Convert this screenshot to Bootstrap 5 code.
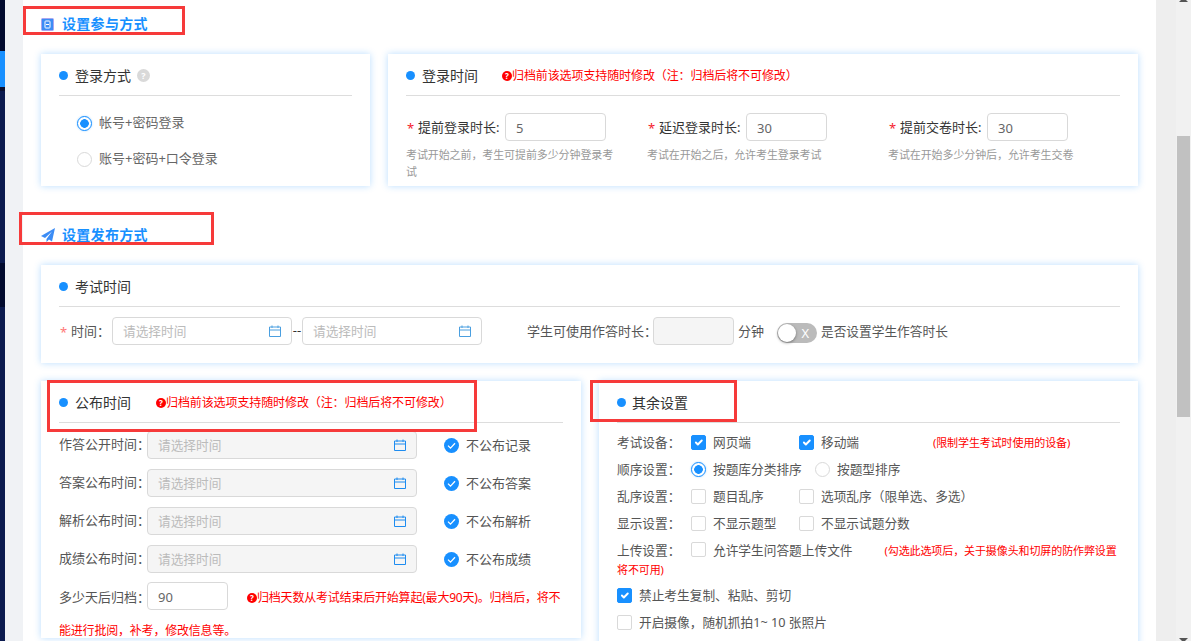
<!DOCTYPE html>
<html lang="zh-CN">
<head>
<meta charset="utf-8">
<title>设置</title>
<link href="https://cdn.jsdelivr.net/npm/bootstrap@5.3.0/dist/css/bootstrap.min.css" rel="stylesheet">
<style>
html,body{height:641px;overflow:hidden}
body{font-family:"Noto Sans","Noto Sans CJK SC",sans-serif;font-size:13px;color:#555;background:#fff;position:relative}
.page-wrap{height:641px}
.side-nav{width:5px;background:#0c1b4f}
.sn-a{height:51px;background:#020b2e}
.sn-b{height:36px;background:#1890ff}
.sn-c{height:4px;background:#0a1030}
.sn-d{height:172px}
.sn-e{height:44px;background:#020b2e}
.gutter-l{width:18px;background:#f0f2f5}
.main-area{width:1133px;padding:0 18px;overflow:hidden;height:641px}
.gutter-r{width:20px;background:#eee}
.sbar{width:15px;background:#f1f1f1;height:641px}
.sbar-thumb{width:13px;height:281px;margin-top:134px;background:#c1c1c1}
.sbar svg{display:block}
.gap-18{gap:18px}
.sec-head{height:18px;line-height:18px;font-size:14px;letter-spacing:.3px;font-weight:700;color:#1890ff;margin-top:15px;margin-bottom:21px}
.sec-head.second{margin-top:40px}
.sec-head svg{margin-right:8px;flex:none}
.sec-head.second svg{margin-right:7px}
.panel{background:#fff;box-shadow:0 0 7px rgba(24,144,255,.3);border-radius:0}
.panel-head{height:42px;flex:none;padding-top:2px;margin:0 18px;border-bottom:1px solid #ddd;color:#333;line-height:20px;font-size:14px}
.dot{width:9px;height:9px;border-radius:50%;background:#1890ff;margin-right:7px;flex:none}
.hint-red{color:#f00;font-size:12px;line-height:18px;letter-spacing:-.1px}
.q-red,.q-gray{display:inline-block;width:10px;height:10px;border-radius:50%;background:#f00;color:#fff;font-size:8px;line-height:10px;text-align:center;font-weight:700;vertical-align:1px;letter-spacing:0}
.q-gray{width:13px;height:13px;line-height:13px;background:#d9d9d9;font-size:9px;margin-left:6px}
.fake-input{height:28px;border:1px solid #d9d9d9;border-radius:4px;background:#fff;padding:0 10px;color:#666;line-height:28px;flex:none}
.fake-input.off{background:#f5f5f5}
.ph{color:#bbb;font-size:12.7px}
.w-81{width:81px}.w-101{width:101px}.w-180{width:180px}.w-270{width:270px}
.star{color:#f5222d;width:12px;flex:none;padding:3px 0 0 1px;line-height:25px}
.star-soft{color:#f77;padding-left:1px}
.card-pad{padding:0 18px}
.fld{width:241px;flex:none}
.fld-label{width:87px;flex:none;color:#333;white-space:nowrap;padding-top:1px}
.fld-help{font-size:11px;line-height:17px;color:#999;margin-top:5px;width:212px;letter-spacing:-.1px}
.radio-stack{padding:9px 0 0 36px}
.radio-line{height:36px;color:#666;gap:7px}
.form-check-input.ck{width:15px;height:15px;margin:0;flex:none;border:1px solid #d9d9d9;border-radius:2px;box-shadow:none;float:none;vertical-align:-2px}
.form-check-input.ck:checked{background-color:#1890ff;border-color:#1890ff}
.form-check-input.rd{width:15px;height:15px;margin:0;flex:none;border:1px solid #d9d9d9;box-shadow:none;float:none}
.form-check-input.rd:checked{background:#fff radial-gradient(circle,#1890ff 0,#1890ff 4px,transparent 4.6px);border-color:#1890ff;box-shadow:0 0 2px rgba(24,144,255,.4)}
.t-row{margin-top:10px;padding:0 18px}
.t-label{color:#555;white-space:nowrap;padding-top:1px}
.t-narrow{font-size:12.7px}
.dash{width:10px;text-align:center;color:#333;flex:none}
.toggle-x{width:40px;height:20px;border-radius:10px;background:#bbb;flex:none;position:relative;color:#fff;font-size:13px;line-height:20px;text-align:right;padding-right:8px;margin-top:4px}
.toggle-x i{position:absolute;left:1px;top:1px;width:18px;height:18px;border-radius:50%;background:#fff;box-shadow:0 1px 3px rgba(0,0,0,.4)}
.cal{flex:none}
.p4{width:540px;height:257px;flex:none}
.p5{width:539px;flex:none}
.pub-rows{padding:8px 18px 0}
.pub-row{height:28px;margin-bottom:10px}
.pub-label{width:88px;flex:none;color:#555;white-space:nowrap}
.pub-row span:last-child{padding-top:2px}
.pub-check{margin-left:27px;margin-right:7px;flex:none}
.arch{line-height:32px;margin-top:-2px;color:#555}
.arch .pub-label{display:inline-block}
.arch .fake-input{display:inline-block}
.arch .hint-red{margin-left:19px;line-height:32px;letter-spacing:-.2px}
.opt-rows{padding:6px 18px 0;font-size:12.7px}
.opt-row{height:27px}
.opt-label{width:74px;flex:none;color:#555;white-space:nowrap}
.opt-a{width:108px;flex:none}
.opt-b{width:124px;flex:none}
.opt-a label,.opt-b label,.opt-free label{margin-left:7px;color:#555}
.opt-wrap{line-height:18px;margin:4px 0 3px}
.opt-wrap .opt-label{display:inline-block}
.opt-wrap label{margin-left:7px;color:#555}
.opt-wrap .hint-red{margin-left:32px}
.opt-rows .hint-red{font-size:11px}
.opt-inputs{margin-top:5px}
.opt-in{width:43px;margin-left:193px}
.opt-in+.opt-in{margin-left:69px;width:42px}
.mark-box{position:absolute;border:3px solid #f63a3a;pointer-events:none}
.mb1{left:23px;top:6px;width:162px;height:29px}
.mb2{left:19px;top:212px;width:195px;height:33px}
.mb3{left:47px;top:380px;width:430px;height:52px}
.mb4{left:590px;top:380px;width:147px;height:42px}
</style>
</head>
<body>
<div class="page-wrap d-flex">
  <div class="side-nav d-flex flex-column">
    <div class="sn-a"></div><div class="sn-b"></div><div class="sn-c"></div><div class="sn-d"></div><div class="sn-e"></div>
  </div>
  <div class="gutter-l"></div>
  <div class="main-area">
    <div class="sec-head d-flex align-items-center">
      <svg width="13" height="13" viewBox="0 0 13 13"><rect x=".5" y=".5" width="12" height="12" rx="1" fill="#3b8cf5" stroke="#a9a5f0"/><rect x="4" y="3" width="5" height="7" rx=".8" fill="none" stroke="#fff"/><path d="M5 6.5h3" stroke="#fff"/></svg>
      <span>设置参与方式</span>
    </div>
    <div class="d-flex gap-18">
      <div class="panel card border-0" style="width:329px;height:132px">
        <div class="panel-head d-flex align-items-center"><span class="dot"></span><span>登录方式</span><span class="q-gray">?</span></div>
        <div class="radio-stack">
          <div class="radio-line d-flex align-items-center"><input class="form-check-input rd" type="radio" name="lg" checked><label>帐号+密码登录</label></div>
          <div class="radio-line d-flex align-items-center"><input class="form-check-input rd" type="radio" name="lg"><label>账号+密码+口令登录</label></div>
        </div>
      </div>
      <div class="panel card border-0" style="width:750px;height:132px">
        <div class="panel-head d-flex align-items-center"><span class="dot"></span><span>登录时间</span><span class="hint-red" style="margin-left:24px"><span class="q-red">?</span>归档前该选项支持随时修改（注：归档后将不可修改）</span></div>
        <div class="card-pad d-flex" style="margin-top:17px">
          <div class="fld">
            <div class="d-flex align-items-center"><span class="star">*</span><span class="fld-label">提前登录时长:</span><div class="fake-input w-101">5</div></div>
            <div class="fld-help">考试开始之前，考生可提前多少分钟登录考试</div>
          </div>
          <div class="fld">
            <div class="d-flex align-items-center"><span class="star">*</span><span class="fld-label">延迟登录时长:</span><div class="fake-input w-81">30</div></div>
            <div class="fld-help">考试在开始之后，允许考生登录考试</div>
          </div>
          <div class="fld">
            <div class="d-flex align-items-center"><span class="star">*</span><span class="fld-label">提前交卷时长:</span><div class="fake-input w-81">30</div></div>
            <div class="fld-help">考试在开始多少分钟后，允许考生交卷</div>
          </div>
        </div>
      </div>
    </div>

    <div class="sec-head second d-flex align-items-center">
      <svg width="14" height="14" viewBox="0 0 14 14"><path d="M14 0 0 8l4 2 7-6.5L5.5 11v3L8 11.5l3 2z" fill="#3b8cf5"/></svg>
      <span>设置发布方式</span>
    </div>
    <div class="panel card border-0" style="height:98px;margin-bottom:18px">
      <div class="panel-head d-flex align-items-center"><span class="dot"></span><span>考试时间</span></div>
      <div class="t-row d-flex align-items-center">
        <span class="star star-soft">*</span><span class="t-label" style="width:41px;flex:none">时间：</span>
        <div class="fake-input w-180 d-flex justify-content-between align-items-center"><span class="ph">请选择时间</span><svg class="cal" width="12" height="12" viewBox="0 0 12 12"><path d="M.5 2h11v9.5H.5zM.5 5h11M3 .5v2.5M9 .5v2.5" fill="none" stroke="#4a9fe0"/></svg></div>
        <span class="dash">--</span>
        <div class="fake-input w-180 d-flex justify-content-between align-items-center"><span class="ph">请选择时间</span><svg class="cal" width="12" height="12" viewBox="0 0 12 12"><path d="M.5 2h11v9.5H.5zM.5 5h11M3 .5v2.5M9 .5v2.5" fill="none" stroke="#4a9fe0"/></svg></div>
        <span class="t-label" style="width:126px;flex:none;margin-left:45px">学生可使用作答时长：</span>
        <div class="fake-input off w-81"></div>
        <span class="t-label" style="margin-left:4px;width:26px;flex:none">分钟</span>
        <span class="toggle-x" style="margin-left:13px"><i></i>X</span>
        <span class="t-label t-narrow" style="margin-left:4px">是否设置学生作答时长</span>
      </div>
    </div>

    <div class="d-flex align-items-start gap-18">
      <div class="panel card border-0 p4">
        <div class="panel-head d-flex align-items-center"><span class="dot"></span><span style="width:57px;flex:none">公布时间</span><span class="hint-red" style="margin-left:24px"><span class="q-red">?</span>归档前该选项支持随时修改（注：归档后将不可修改）</span></div>
        <div class="pub-rows">
          <div class="pub-row d-flex align-items-center"><span class="pub-label">作答公开时间：</span><div class="fake-input off w-270 d-flex justify-content-between align-items-center"><span class="ph">请选择时间</span><svg class="cal" width="12" height="12" viewBox="0 0 12 12"><path d="M.5 2h11v9.5H.5zM.5 5h11M3 .5v2.5M9 .5v2.5" fill="none" stroke="#1e8cf0"/></svg></div><svg class="pub-check" width="15" height="15" viewBox="0 0 15 15"><circle cx="7.5" cy="7.5" r="7.5" fill="#1890ff"/><path d="m4 7.6 2.5 2.5L11 5.2" fill="none" stroke="#fff" stroke-width="1.3"/></svg><span>不公布记录</span></div>
          <div class="pub-row d-flex align-items-center"><span class="pub-label">答案公布时间：</span><div class="fake-input off w-270 d-flex justify-content-between align-items-center"><span class="ph">请选择时间</span><svg class="cal" width="12" height="12" viewBox="0 0 12 12"><path d="M.5 2h11v9.5H.5zM.5 5h11M3 .5v2.5M9 .5v2.5" fill="none" stroke="#1e8cf0"/></svg></div><svg class="pub-check" width="15" height="15" viewBox="0 0 15 15"><circle cx="7.5" cy="7.5" r="7.5" fill="#1890ff"/><path d="m4 7.6 2.5 2.5L11 5.2" fill="none" stroke="#fff" stroke-width="1.3"/></svg><span>不公布答案</span></div>
          <div class="pub-row d-flex align-items-center"><span class="pub-label">解析公布时间：</span><div class="fake-input off w-270 d-flex justify-content-between align-items-center"><span class="ph">请选择时间</span><svg class="cal" width="12" height="12" viewBox="0 0 12 12"><path d="M.5 2h11v9.5H.5zM.5 5h11M3 .5v2.5M9 .5v2.5" fill="none" stroke="#1e8cf0"/></svg></div><svg class="pub-check" width="15" height="15" viewBox="0 0 15 15"><circle cx="7.5" cy="7.5" r="7.5" fill="#1890ff"/><path d="m4 7.6 2.5 2.5L11 5.2" fill="none" stroke="#fff" stroke-width="1.3"/></svg><span>不公布解析</span></div>
          <div class="pub-row d-flex align-items-center"><span class="pub-label">成绩公布时间：</span><div class="fake-input off w-270 d-flex justify-content-between align-items-center"><span class="ph">请选择时间</span><svg class="cal" width="12" height="12" viewBox="0 0 12 12"><path d="M.5 2h11v9.5H.5zM.5 5h11M3 .5v2.5M9 .5v2.5" fill="none" stroke="#1e8cf0"/></svg></div><svg class="pub-check" width="15" height="15" viewBox="0 0 15 15"><circle cx="7.5" cy="7.5" r="7.5" fill="#1890ff"/><path d="m4 7.6 2.5 2.5L11 5.2" fill="none" stroke="#fff" stroke-width="1.3"/></svg><span>不公布成绩</span></div>
          <div class="arch"><span class="pub-label">多少天后归档：</span><span class="fake-input w-81">90</span><span class="hint-red"><span class="q-red">?</span>归档天数从考试结束后开始算起(最大90天)。归档后，将不能进行批阅，补考，修改信息等。</span></div>
        </div>
      </div>

      <div class="panel card border-0 p5">
        <div class="panel-head d-flex align-items-center"><span class="dot" style="margin-right:6px"></span><span>其余设置</span></div>
        <div class="opt-rows">
          <div class="opt-row d-flex align-items-center"><span class="opt-label">考试设备：</span><div class="opt-a d-flex align-items-center"><input class="form-check-input ck" type="checkbox" checked><label>网页端</label></div><div class="opt-a d-flex align-items-center"><input class="form-check-input ck" type="checkbox" checked><label>移动端</label></div><span class="hint-red" style="margin-left:26px">(限制学生考试时使用的设备)</span></div>
          <div class="opt-row d-flex align-items-center"><span class="opt-label">顺序设置：</span><div class="opt-b d-flex align-items-center"><input class="form-check-input rd" type="radio" name="od" checked><label>按题库分类排序</label></div><div class="d-flex align-items-center opt-free"><input class="form-check-input rd" type="radio" name="od"><label>按题型排序</label></div></div>
          <div class="opt-row d-flex align-items-center"><span class="opt-label">乱序设置：</span><div class="opt-a d-flex align-items-center"><input class="form-check-input ck" type="checkbox"><label>题目乱序</label></div><div class="d-flex align-items-center opt-free"><input class="form-check-input ck" type="checkbox"><label>选项乱序（限单选、多选）</label></div></div>
          <div class="opt-row d-flex align-items-center"><span class="opt-label">显示设置：</span><div class="opt-a d-flex align-items-center"><input class="form-check-input ck" type="checkbox"><label>不显示题型</label></div><div class="d-flex align-items-center opt-free"><input class="form-check-input ck" type="checkbox"><label>不显示试题分数</label></div></div>
          <div class="opt-wrap"><span class="opt-label">上传设置：</span><input class="form-check-input ck" type="checkbox"><label>允许学生问答题上传文件</label><span class="hint-red">(勾选此选项后，关于摄像头和切屏的防作弊设置将不可用)</span></div>
          <div class="opt-row d-flex align-items-center opt-free"><input class="form-check-input ck" type="checkbox" checked><label>禁止考生复制、粘贴、剪切</label></div>
          <div class="opt-row d-flex align-items-center opt-free"><input class="form-check-input ck" type="checkbox"><label>开启摄像，随机抓拍1~ 10 张照片</label></div>
          <div class="opt-inputs d-flex"><div class="fake-input opt-in"></div><div class="fake-input opt-in"></div></div>
        </div>
      </div>
    </div>
  </div>
  <div class="gutter-r"></div>
  <div class="sbar d-flex flex-column align-items-center">
    <svg width="9" height="2" viewBox="0 0 9 2"><path d="M2 0h5l2 2H0z" fill="#555"/></svg>
    <div class="sbar-thumb"></div>
    <svg class="mt-auto" width="9" height="3" viewBox="0 0 9 3"><path d="M0 0h9L6 3H3z" fill="#555"/></svg>
  </div>
</div>
<div class="mark-box mb1"></div>
<div class="mark-box mb2"></div>
<div class="mark-box mb3"></div>
<div class="mark-box mb4"></div>
<script src="https://cdn.jsdelivr.net/npm/bootstrap@5.3.0/dist/js/bootstrap.bundle.min.js"></script>
</body>
</html>
